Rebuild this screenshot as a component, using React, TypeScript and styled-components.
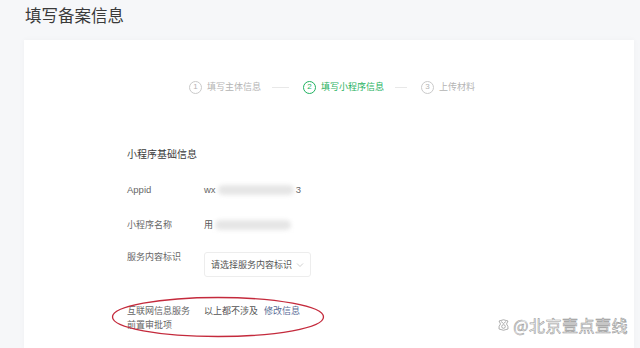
import React from "react";
import styled, { createGlobalStyle } from "styled-components";

const Global = createGlobalStyle`
  html, body { margin: 0; padding: 0; background: #f6f7f9; }
  body { font-family: "Noto Sans CJK SC", "Noto Sans", sans-serif; }
`;

const Page = styled.div`
  width: 640px;
  height: 348px;
  overflow: hidden;
  display: flex;
  flex-direction: column;
  position: relative;
`;

const Title = styled.h1`
  margin: 0;
  height: 40px;
  box-sizing: border-box;
  padding: 4px 0 0 25px;
  font-size: 16.5px;
  line-height: 22px;
  font-weight: 400;
  color: #3a3a3a;
`;

const Card = styled.div`
  flex: 1;
  margin: 0 6px 0 24px;
  background: #fff;
  box-shadow: 0 0 6px rgba(0, 0, 0, 0.035);
  padding-top: 40px;
  display: flex;
  flex-direction: column;
`;

const Steps = styled.div`
  display: flex;
  align-items: center;
  justify-content: center;
  height: 14px;
  padding-left: 6px;
`;

const Step = styled.div<{ $active?: boolean }>`
  display: flex;
  align-items: center;
  gap: 5px;
  font-size: 9px;
  line-height: 14px;
  color: ${(p) => (p.$active ? "#1fb260" : "#b4b4b4")};
`;

const Circle = styled.span<{ $active?: boolean }>`
  width: 11px;
  height: 11px;
  border-radius: 50%;
  border: 1px solid ${(p) => (p.$active ? "#1fb260" : "#cacaca")};
  display: flex;
  align-items: center;
  justify-content: center;
  font-family: "Liberation Sans", sans-serif;
  font-size: 8px;
  line-height: 1;
`;

const StepLine = styled.span<{ $w: number }>`
  width: ${(p) => p.$w}px;
  height: 1px;
  background: #e8e8e8;
  margin: 0 14px 0 11px;
`;

const Form = styled.div`
  margin-top: 53px;
  padding-left: 103px;
  display: flex;
  flex-direction: column;
`;

const SectionTitle = styled.div`
  font-size: 10px;
  line-height: 14px;
  color: #3a3a3a;
`;

const Row = styled.div<{ $mt: number }>`
  display: flex;
  align-items: flex-start;
  margin-top: ${(p) => p.$mt}px;
  position: relative;
`;

const Label = styled.div`
  width: 77px;
  flex-shrink: 0;
  font-size: 9px;
  line-height: 14px;
  color: #666;
`;

const Value = styled.div`
  display: flex;
  align-items: center;
  font-size: 9px;
  line-height: 14px;
  color: #555;
`;

const AppidText = styled.span`
  font-family: "Liberation Sans", sans-serif;
  font-size: 9.5px;
  color: #666;
`;

const Blur = styled.span<{ $w: number }>`
  display: inline-block;
  width: ${(p) => p.$w}px;
  height: 10px;
  margin: 0 2px;
  background: #e6e6e6;
  border-radius: 5px;
  filter: blur(2px);
`;

const Select = styled.div`
  margin-top: 2px;
  width: 107px;
  height: 25px;
  box-sizing: border-box;
  border: 1px solid #ededed;
  border-radius: 3px;
  display: flex;
  align-items: center;
  justify-content: space-between;
  padding: 0 6px 0 6px;
  font-size: 9px;
  color: #555;
`;

const Link = styled.span`
  color: #576b95;
  margin-left: 6px;
`;

const Ellipse = styled.svg`
  position: absolute;
  left: -16px;
  top: -8px;
  width: 214px;
  height: 42px;
  pointer-events: none;
`;

const Watermark = styled.div`
  position: absolute;
  right: 12px;
  bottom: 13px;
  display: flex;
  align-items: center;
  gap: 3px;
  font-size: 16px;
  line-height: 20px;
  color: #fff;
  -webkit-text-stroke: 0.6px #9a9a9a;
  letter-spacing: 0.5px;
`;

const Chevron = () => (
  <svg width="8" height="6" viewBox="0 0 8 6">
    <polyline points="1,1.5 4,4.5 7,1.5" fill="none" stroke="#c8c8c8" strokeWidth="0.9" />
  </svg>
);

const WmIcon = () => (
  <svg width="13" height="14" viewBox="0 0 13 14">
    <path
      d="M2 3 Q6.5 0.5 11 3 L9.5 6 Q11.5 8 11 11 Q6.5 13.5 2 11 Q1.5 8 3.5 6 Z"
      fill="#fff"
      stroke="#9a9a9a"
      strokeWidth="0.8"
    />
    <circle cx="6.5" cy="8.5" r="1.8" fill="none" stroke="#9a9a9a" strokeWidth="0.8" />
    <path d="M4 3.5 L6.5 5.5 L9 3.5" fill="none" stroke="#9a9a9a" strokeWidth="0.8" />
  </svg>
);

export default function App() {
  return (
    <Page>
      <Global />
      <Title>填写备案信息</Title>
      <Card>
        <Steps>
          <Step>
            <Circle>1</Circle>
            填写主体信息
          </Step>
          <StepLine $w={17} />
          <Step $active>
            <Circle $active>2</Circle>
            填写小程序信息
          </Step>
          <StepLine $w={12} />
          <Step>
            <Circle>3</Circle>
            上传材料
          </Step>
        </Steps>
        <Form>
          <SectionTitle>小程序基础信息</SectionTitle>
          <Row $mt={22}>
            <Label>
              <AppidText>Appid</AppidText>
            </Label>
            <Value>
              <AppidText>wx</AppidText>
              <Blur $w={76} />
              <AppidText>3</AppidText>
            </Value>
          </Row>
          <Row $mt={21}>
            <Label>小程序名称</Label>
            <Value>
              用<Blur $w={76} />
            </Value>
          </Row>
          <Row $mt={18}>
            <Label>服务内容标识</Label>
            <Select>
              请选择服务内容标识
              <Chevron />
            </Select>
          </Row>
          <Row $mt={27}>
            <Label>
              互联网信息服务
              <br />
              前置审批项
            </Label>
            <Value>
              以上都不涉及<Link>修改信息</Link>
            </Value>
            <Ellipse viewBox="0 0 214 42">
              <ellipse cx="107" cy="21" rx="105.5" ry="19.5" fill="none" stroke="#c42a3c" strokeWidth="1.3" />
            </Ellipse>
          </Row>
        </Form>
      </Card>
      <Watermark>
        <WmIcon />
        @北京壹点壹线
      </Watermark>
    </Page>
  );
}
